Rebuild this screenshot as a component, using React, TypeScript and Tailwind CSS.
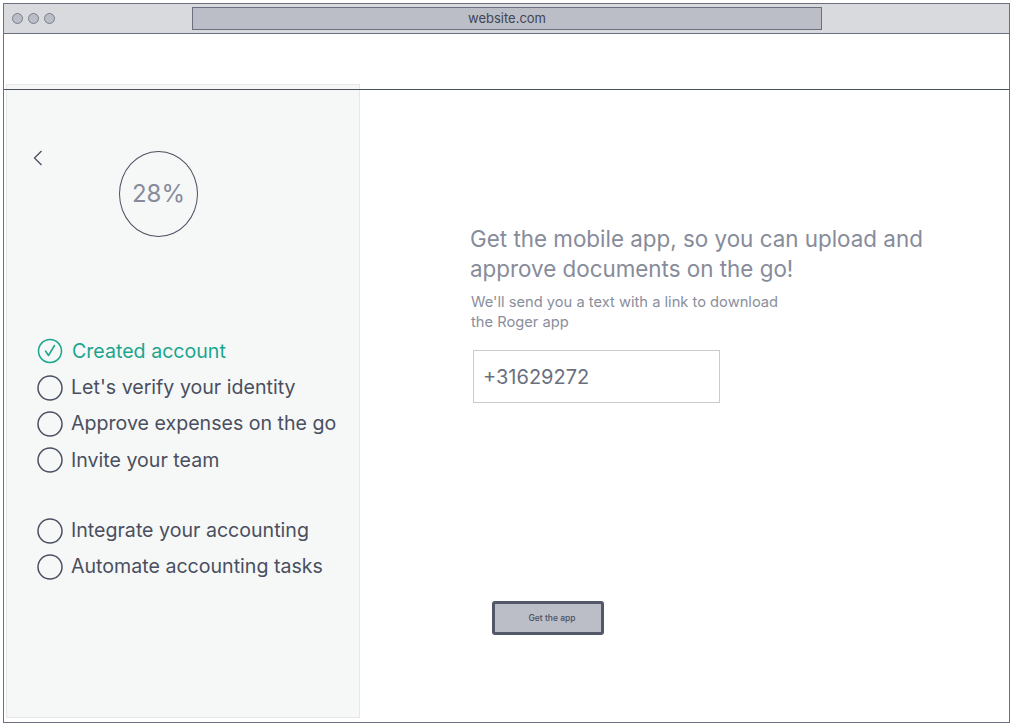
const steps = [
	{ label: "Let's verify your identity" },
	{ label: "Approve expenses on the go" },
	{ label: "Invite your team" },
];

const moreSteps = [
	{ label: "Integrate your accounting" },
	{ label: "Automate accounting tasks" },
];

function EmptyCircle() {
	return (
		<svg width="26" height="26" viewBox="0 0 26 26" className="shrink-0">
			<circle cx="13" cy="13" r="12" fill="none" stroke="#4b5061" strokeWidth="1.5" />
		</svg>
	);
}

function CheckCircle() {
	return (
		<svg width="26" height="26" viewBox="0 0 26 26" className="shrink-0">
			<circle cx="13" cy="13" r="11.5" fill="none" stroke="#1aa68e" strokeWidth="1.5" />
			<path d="M8.5 13 L11.5 17.5 L17.5 7.5" fill="none" stroke="#1aa68e" strokeWidth="1.5" strokeLinecap="round" strokeLinejoin="round" />
		</svg>
	);
}

function StepRow({ label }: { label: string }) {
	return (
		<div className="flex h-[36.4px] items-center gap-[8px]">
			<EmptyCircle />
			<span className="text-[19.6px] text-[#4a4f5f]">{label}</span>
		</div>
	);
}

export default function App() {
	return (
		<div className="h-[726px] w-[1014px] bg-white p-[3px] font-['Inter',sans-serif]">
			<div className="relative flex h-[720px] w-[1007px] flex-col border border-[#6b7080]">
				{/* browser chrome */}
				<div className="flex h-[30px] items-center border-b border-[#6b7080] bg-[#d9dadd] pl-[8px]">
					<div className="flex gap-[5px]">
						<span className="h-[11px] w-[11px] rounded-full border border-[#7a7f8d] bg-[#bbbec6]" />
						<span className="h-[11px] w-[11px] rounded-full border border-[#7a7f8d] bg-[#bbbec6]" />
						<span className="h-[11px] w-[11px] rounded-full border border-[#7a7f8d] bg-[#bbbec6]" />
					</div>
					<div className="ml-[137px] flex h-[23px] w-[630px] items-center justify-center border border-[#6b7080] bg-[#bbbec6] text-[13px] text-[#3f4456]">
						website.com
					</div>
				</div>
				<div className="h-[50px]" />
				<div className="absolute left-0 right-0 top-[85px] z-10 h-px bg-[#4b5061]" />

				<div className="flex flex-1 pb-[4px] pl-[2px]">
					{/* sidebar */}
					<aside className="flex w-[354px] flex-col border border-[#e6e8e7] bg-[#f6f8f7]">
						<div className="flex items-start pt-[65px]">
							<svg width="10" height="16" viewBox="0 0 10 16" className="ml-[26px]">
								<path d="M8.5 1 L1.5 8 L8.5 15" fill="none" stroke="#4b5061" strokeWidth="1.3" />
							</svg>
							<div className="ml-[76px] mt-[1px] flex h-[86px] w-[79px] items-center justify-center rounded-[50%] border border-[#4b5061] text-[24px] text-[#878b9c]">
								28%
							</div>
						</div>
						<div className="ml-[30px] mt-[96px] flex flex-col">
							<div className="flex h-[36.4px] items-center gap-[9px]">
								<CheckCircle />
								<span className="text-[19.6px] text-[#1aa68e]">Created account</span>
							</div>
							{steps.map((s) => (
								<StepRow key={s.label} label={s.label} />
							))}
							<div className="h-[34px]" />
							{moreSteps.map((s) => (
								<StepRow key={s.label} label={s.label} />
							))}
						</div>
					</aside>

					{/* main */}
					<main className="flex flex-1 flex-col pl-[110px] pt-[140px]">
						<h1 className="text-[22.4px] leading-[30px] text-[#878c9a]">
							Get the mobile app, so you can upload and
							<br />
							approve documents on the go!
						</h1>
						<p className="ml-[1px] mt-[8px] text-[14.7px] leading-[20px] text-[#8a8e9c]">
							We'll send you a text with a link to download
							<br />
							the Roger app
						</p>
						<div className="ml-[3px] mt-[18px] flex h-[53px] w-[247px] items-center border border-[#c9cbd0] bg-white pl-[9px] text-[20px] text-[#6b7080]">
							+31629272
						</div>
						<button className="ml-[22px] mt-[198px] flex h-[34px] w-[112px] items-center justify-center rounded-[3px] border-[3px] border-[#535869] bg-[#bbbec6] pl-[8px] text-[8.5px] font-medium text-[#4b5063]">
							Get the app
						</button>
					</main>
				</div>
			</div>
		</div>
	);
}
